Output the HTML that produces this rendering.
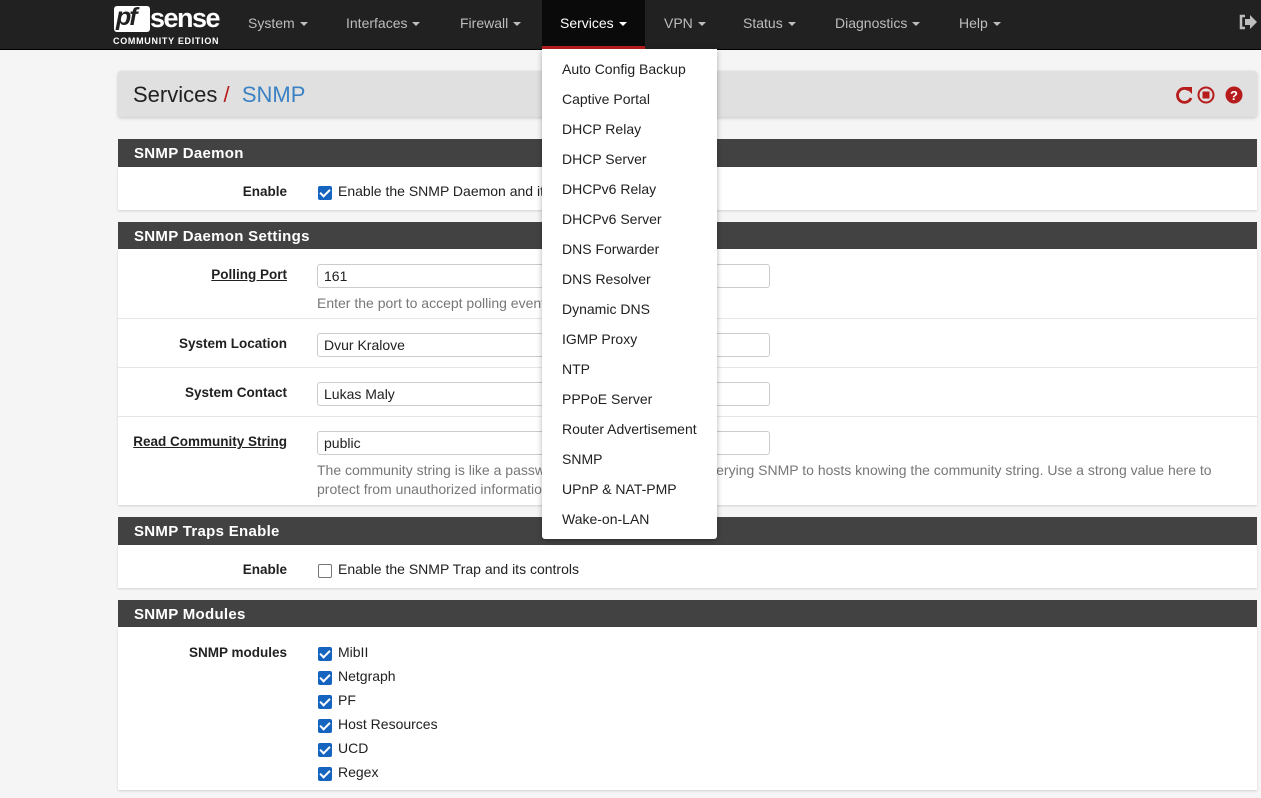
<!DOCTYPE html>
<html><head><meta charset="utf-8"><style>
*{box-sizing:border-box;margin:0;padding:0}
body{width:1261px;height:798px;overflow:hidden;background:#f5f5f5;font-family:"Liberation Sans",sans-serif;font-size:13.5px;color:#212121;position:relative}
.nav{position:absolute;left:0;top:0;width:1261px;height:50px;background:#212121;border-bottom:1px solid #000}
.nav .it{position:absolute;top:15px;color:#bdbdbd;font-size:14px}
.car{display:inline-block;border-left:4px solid transparent;border-right:4px solid transparent;border-top:4px solid currentColor;vertical-align:middle;margin-left:5px}
.abs{position:absolute}
.ph{position:absolute;left:118px;width:1139px;height:28px;background:#424242;color:#fff;font-weight:bold;font-size:15px;padding:6px 0 0 16px;letter-spacing:.3px}
.pb{position:absolute;left:118px;width:1139px;background:#fff;box-shadow:0 1px 2px rgba(0,0,0,.15)}
.lbl{position:absolute;right:974px;font-weight:bold;font-size:13.5px}
.u{text-decoration:underline}
.inp{position:absolute;left:317px;width:453px;height:24px;border:1px solid #ccc;border-radius:3px;background:#fff;padding:3px 6px;font-size:14px}
.help{position:absolute;left:317px;color:#777;font-size:14px;line-height:19px}
.cb{position:absolute;left:318px;width:14px;height:14px;border-radius:2px;background:#1565c0}
.cb:after{content:"";position:absolute;left:4px;top:1px;width:4px;height:8px;border:solid #fff;border-width:0 2px 2px 0;transform:rotate(45deg)}
.cbo{position:absolute;left:318px;width:14px;height:14px;border-radius:2px;border:1px solid #777;background:#fff}
.ct{position:absolute;left:338px;font-size:14px}
.sep{position:absolute;left:118px;width:1139px;height:1px;background:#e5e5e5}
.dd{position:absolute;left:542px;top:49px;width:175px;height:490px;background:#fff;box-shadow:0 2px 6px rgba(0,0,0,.3);border-radius:0 0 3px 3px}
.dd div{position:absolute;left:20px;font-size:14px;color:#212121}
</style></head><body>
<div class="nav">
 <div class="abs" style="left:114px;top:6px;width:36px;height:26px;background:#fff;border-radius:3px"></div>
 <div class="abs" style="left:116px;top:3px;font:italic bold 25px 'Liberation Sans',sans-serif;color:#212121;letter-spacing:-2px">pf</div>
 <div class="abs" style="left:150px;top:3px;font:bold 27px 'Liberation Sans',sans-serif;color:#fff;letter-spacing:-1.5px">sense</div>
 <div class="abs" style="left:113px;top:36px;font:bold 9px 'Liberation Sans',sans-serif;color:#fff;letter-spacing:.7px">COMMUNITY EDITION</div>
 <div class="it" style="left:248px">System<span class="car"></span></div>
 <div class="it" style="left:346px">Interfaces<span class="car"></span></div>
 <div class="it" style="left:460px">Firewall<span class="car"></span></div>
 <div class="abs" style="left:542px;top:0;width:103px;height:50px;background:#0a0a0a;border-bottom:4px solid #b71c1c"></div>
 <div class="it" style="left:560px;color:#fff">Services<span class="car"></span></div>
 <div class="it" style="left:664px">VPN<span class="car"></span></div>
 <div class="it" style="left:743px">Status<span class="car"></span></div>
 <div class="it" style="left:835px">Diagnostics<span class="car"></span></div>
 <div class="it" style="left:959px">Help<span class="car"></span></div>
 <svg class="abs" style="left:1239px;top:14px" width="18" height="16" viewBox="0 0 18 16"><path d="M6 2H2v12h4" fill="none" stroke="#bdbdbd" stroke-width="2.5"/><path d="M6 5h5V1l7 7-7 7v-4H6z" fill="#bdbdbd"/></svg>
</div>

<div class="abs" style="left:118px;top:71px;width:1139px;height:46px;background:#e0e0e0;border-radius:3px;box-shadow:0 1px 3px rgba(0,0,0,.2)"></div>
<div class="abs" style="left:133px;top:82px;font-size:22px;color:#212121">Services <span style="color:#b71c1c">/</span> <span style="color:#3b82c4">&nbsp;SNMP</span></div>
<svg class="abs" style="left:1174px;top:85px" width="70" height="20" viewBox="0 0 70 20">
<path d="M15 5A7 7 0 1 0 17 13" fill="none" stroke="#b71c1c" stroke-width="2.8"/><path d="M11 2h7v7z" fill="#b71c1c"/>
<circle cx="32" cy="10" r="7.5" fill="none" stroke="#b71c1c" stroke-width="2"/><rect x="28.5" y="6.5" width="7" height="7" fill="#b71c1c"/>
<circle cx="60" cy="10" r="8.5" fill="#b71c1c"/><text x="60" y="15" text-anchor="middle" font-family="Liberation Sans" font-weight="bold" font-size="13" fill="#fff">?</text></svg>

<div class="ph" style="top:139px">SNMP Daemon</div>
<div class="pb" style="top:167px;height:43px"></div>
<div class="lbl" style="top:184px">Enable</div>
<div class="cb" style="top:186px"></div><div class="ct" style="top:183px">Enable the SNMP Daemon and its controls</div>

<div class="ph" style="top:222px">SNMP Daemon Settings</div>
<div class="pb" style="top:249px;height:256px"></div>
<div class="lbl u" style="top:267px">Polling Port</div>
<div class="inp" style="top:264px">161</div>
<div class="help" style="top:294px">Enter the port to accept polling events on (default 161).</div>
<div class="sep" style="top:318px"></div>
<div class="lbl" style="top:336px">System Location</div>
<div class="inp" style="top:333px">Dvur Kralove</div>
<div class="sep" style="top:367px"></div>
<div class="lbl" style="top:385px">System Contact</div>
<div class="inp" style="top:382px">Lukas Maly</div>
<div class="sep" style="top:416px"></div>
<div class="lbl u" style="top:434px">Read Community String</div>
<div class="inp" style="top:431px">public</div>
<div class="help" style="top:461px;width:920px">The community string is like a password, restricting access to querying SNMP to hosts knowing the community string. Use a strong value here to protect from unauthorized information disclosure.</div>

<div class="ph" style="top:517px">SNMP Traps Enable</div>
<div class="pb" style="top:545px;height:43px"></div>
<div class="lbl" style="top:562px">Enable</div>
<div class="cbo" style="top:564px"></div><div class="ct" style="top:561px">Enable the SNMP Trap and its controls</div>

<div class="ph" style="top:600px">SNMP Modules</div>
<div class="pb" style="top:627px;height:163px"></div>
<div class="lbl" style="top:645px">SNMP modules</div>
<div class="cb" style="top:647px"></div><div class="ct" style="top:644px">MibII</div>
<div class="cb" style="top:671px"></div><div class="ct" style="top:668px">Netgraph</div>
<div class="cb" style="top:695px"></div><div class="ct" style="top:692px">PF</div>
<div class="cb" style="top:719px"></div><div class="ct" style="top:716px">Host Resources</div>
<div class="cb" style="top:743px"></div><div class="ct" style="top:740px">UCD</div>
<div class="cb" style="top:767px"></div><div class="ct" style="top:764px">Regex</div>

<div class="dd">
<div style="top:12px">Auto Config Backup</div>
<div style="top:42px">Captive Portal</div>
<div style="top:72px">DHCP Relay</div>
<div style="top:102px">DHCP Server</div>
<div style="top:132px">DHCPv6 Relay</div>
<div style="top:162px">DHCPv6 Server</div>
<div style="top:192px">DNS Forwarder</div>
<div style="top:222px">DNS Resolver</div>
<div style="top:252px">Dynamic DNS</div>
<div style="top:282px">IGMP Proxy</div>
<div style="top:312px">NTP</div>
<div style="top:342px">PPPoE Server</div>
<div style="top:372px">Router Advertisement</div>
<div style="top:402px">SNMP</div>
<div style="top:432px">UPnP &amp; NAT-PMP</div>
<div style="top:462px">Wake-on-LAN</div>
</div>
</body></html>
